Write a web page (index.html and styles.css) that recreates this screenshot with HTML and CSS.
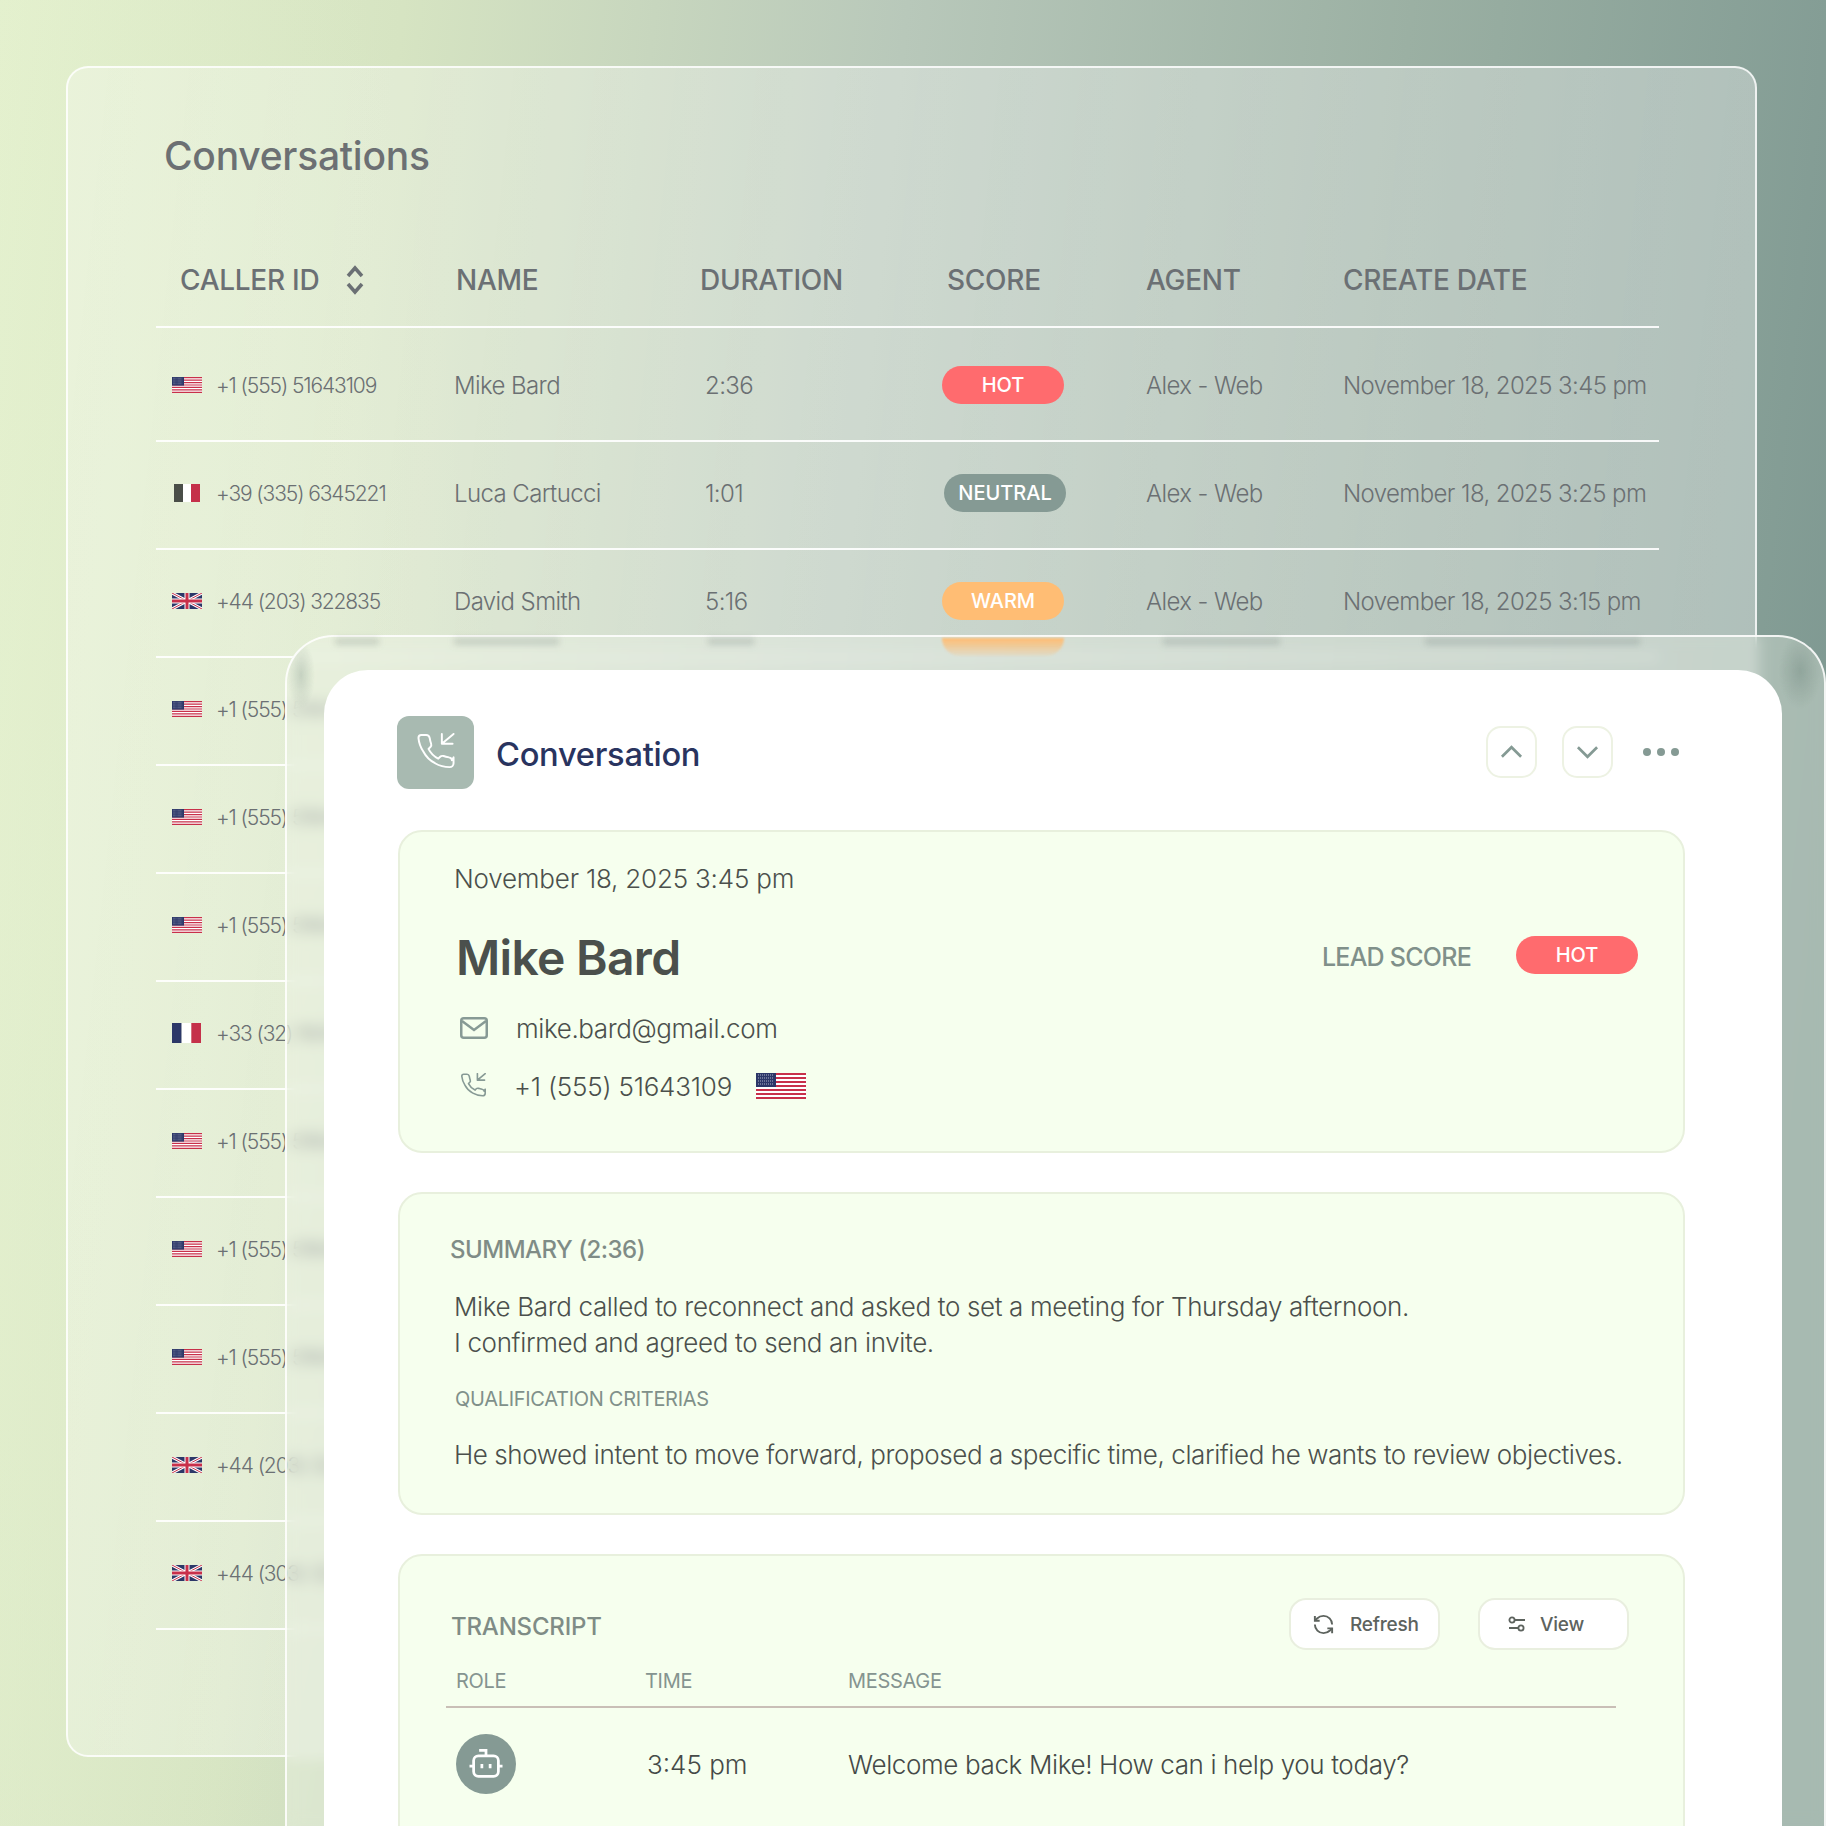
FILE: index.html
```html
<!DOCTYPE html>
<html>
<head>
  <title>Conversations</title>
  <link rel="stylesheet" href="styles.css">
</head>
<body>
  <svg class="defs" width="0" height="0">
    <symbol id="flag-us" viewBox="0 0 50 26" preserveAspectRatio="none">
      <rect width="50" height="26" fill="#fff"/>
      <path d="M0 1h50M0 5h50M0 9h50M0 13h50M0 17h50M0 21h50M0 25h50" stroke="#c8304a" stroke-width="2"/>
      <rect width="20" height="14" fill="#2c3768"/>
      <path d="M2 2h16M2 5h16M2 8h16M2 11h16" stroke="#aeb4c8" stroke-width="1" stroke-dasharray="1 1"/>
    </symbol>
    <symbol id="flag-it" viewBox="0 0 26 18" preserveAspectRatio="none">
      <rect width="9" height="18" fill="#4a4e48"/>
      <rect x="9" width="8" height="18" fill="#fff"/>
      <rect x="17" width="9" height="18" fill="#c5304a"/>
    </symbol>
    <symbol id="flag-fr" viewBox="0 0 30 20" preserveAspectRatio="none">
      <rect width="10" height="20" fill="#2c3768"/>
      <rect x="10" width="10" height="20" fill="#fff"/>
      <rect x="20" width="10" height="20" fill="#c5304a"/>
    </symbol>
    <symbol id="flag-uk" viewBox="0 0 30 16" preserveAspectRatio="none">
      <rect width="30" height="16" fill="#2c3768"/>
      <path d="M0 0l30 16M30 0L0 16" stroke="#fff" stroke-width="3"/>
      <path d="M0 0l30 16M30 0L0 16" stroke="#c8304a" stroke-width="1"/>
      <path d="M15 0v16M0 8h30" stroke="#fff" stroke-width="5"/>
      <path d="M15 0v16M0 8h30" stroke="#c8304a" stroke-width="3"/>
    </symbol>
    <symbol id="icon-call" viewBox="0 0 40 40">
      <path d="M38 25v6a4 4 0 0 1-4 4 30 30 0 0 1-15-4 28 28 0 0 1-12-12 30 30 0 0 1-5-14 3 3 0 0 1 3-3h5c2 0 3 1 3.500 3 .3 2 .8 4 1.500 6 .4 1.200 .2 2.400-.7 3.300l-2 2c2 4 6 8 10 10l2-2c1-1 2-1 3.500-.7 1.700 .6 3.500 1 5.500 1.400 2 .3 3 1.500 3 3z" fill="none" stroke="currentColor" stroke-linejoin="round"/>
      <path d="M26 1v10h11M26 11L38 1" fill="none" stroke="currentColor" stroke-linecap="round" stroke-linejoin="round"/>
    </symbol>
  </svg>

  <div class="page">
    <section class="panel">
      <h1 class="panel-title">Conversations</h1>
      <div class="grid-row table-head">
        <div class="head-caller">CALLER ID
          <svg class="sort-icon" viewBox="0 0 20 30"><path d="M3 11l7-8 7 8M3 19l7 8 7-8"/></svg>
        </div>
        <div class="head-name">NAME</div>
        <div>DURATION</div>
        <div class="head-score">SCORE</div>
        <div>AGENT</div>
        <div>CREATE DATE</div>
      </div>

      <div class="grid-row table-row first-row">
        <div class="caller"><svg class="flag"><use href="#flag-us"/></svg>+1 (555) 51643109</div>
        <div>Mike Bard</div>
        <div class="duration">2:36</div>
        <div><span class="pill pill-hot">HOT</span></div>
        <div>Alex - Web</div>
        <div>November 18, 2025 3:45 pm</div>
      </div>
      <div class="grid-row table-row">
        <div class="caller"><svg class="flag flag-small"><use href="#flag-it"/></svg>+39 (335) 6345221</div>
        <div>Luca Cartucci</div>
        <div class="duration">1:01</div>
        <div><span class="pill pill-neutral">NEUTRAL</span></div>
        <div>Alex - Web</div>
        <div>November 18, 2025 3:25 pm</div>
      </div>
      <div class="grid-row table-row">
        <div class="caller"><svg class="flag"><use href="#flag-uk"/></svg>+44 (203) 322835</div>
        <div>David Smith</div>
        <div class="duration">5:16</div>
        <div><span class="pill pill-warm">WARM</span></div>
        <div>Alex - Web</div>
        <div>November 18, 2025 3:15 pm</div>
      </div>
      <div class="grid-row table-row"><div class="caller"><svg class="flag"><use href="#flag-us"/></svg>+1 (555) 51643109</div></div>
      <div class="grid-row table-row"><div class="caller"><svg class="flag"><use href="#flag-us"/></svg>+1 (555) 51643109</div></div>
      <div class="grid-row table-row"><div class="caller"><svg class="flag"><use href="#flag-us"/></svg>+1 (555) 51643109</div></div>
      <div class="grid-row table-row"><div class="caller"><svg class="flag flag-fr"><use href="#flag-fr"/></svg>+33 (32) 1643109</div></div>
      <div class="grid-row table-row"><div class="caller"><svg class="flag"><use href="#flag-us"/></svg>+1 (555) 51643109</div></div>
      <div class="grid-row table-row"><div class="caller"><svg class="flag"><use href="#flag-us"/></svg>+1 (555) 51643109</div></div>
      <div class="grid-row table-row"><div class="caller"><svg class="flag"><use href="#flag-us"/></svg>+1 (555) 51643109</div></div>
      <div class="grid-row table-row"><div class="caller"><svg class="flag"><use href="#flag-uk"/></svg>+44 (203) 322835</div></div>
      <div class="grid-row table-row"><div class="caller"><svg class="flag"><use href="#flag-uk"/></svg>+44 (303) 322835</div></div>
    </section>

    <section class="glass">
      <i class="smear smear-phone"></i>
      <i class="smear smear-name"></i>
      <i class="smear smear-time"></i>
      <i class="smear smear-warm"></i>
      <i class="smear smear-agent"></i>
      <i class="smear smear-date"></i>

      <div class="card">
        <header class="card-head">
          <div class="call-tile"><svg class="tile-icon"><use href="#icon-call"/></svg></div>
          <h2 class="card-title">Conversation</h2>
          <div class="card-actions">
            <button class="nav-btn"><svg viewBox="0 0 24 14"><path d="M2 12L12 2l10 10"/></svg></button>
            <button class="nav-btn"><svg viewBox="0 0 24 14"><path d="M2 2l10 10L22 2"/></svg></button>
            <div class="dots"><span></span><span></span><span></span></div>
          </div>
        </header>

        <div class="box box-contact">
          <div class="contact-date">November 18, 2025 3:45 pm</div>
          <div class="contact-main">
            <div class="contact-name">Mike Bard</div>
            <div class="lead-label">LEAD SCORE</div>
            <span class="pill pill-hot pill-lead">HOT</span>
          </div>
          <div class="contact-line line-mail">
            <svg class="mail-icon" viewBox="0 0 28 22"><rect x="1.250" y="1.250" width="25.500" height="19.500" rx="2.500"/><path d="M2 4l12 9 12-9"/></svg>
            <span>mike.bard@gmail.com</span>
          </div>
          <div class="contact-line line-phone">
            <svg class="phone-icon"><use href="#icon-call"/></svg>
            <span>+1 (555) 51643109</span>
            <svg class="flag-big"><use href="#flag-us"/></svg>
          </div>
        </div>

        <div class="box box-summary">
          <div class="section-label">SUMMARY (2:36)</div>
          <p class="summary-text">Mike Bard called to reconnect and asked to set a meeting for Thursday afternoon.<br>I confirmed and agreed to send an invite.</p>
          <div class="criteria-label">QUALIFICATION CRITERIAS</div>
          <p class="criteria-text">He showed intent to move forward, proposed a specific time, clarified he wants to review objectives.</p>
        </div>

        <div class="box box-transcript">
          <div class="transcript-top">
            <div class="section-label transcript-label">TRANSCRIPT</div>
            <button class="tool-btn btn-refresh">
              <svg viewBox="0 0 24 24"><path d="M21 12a9 9 0 0 0-9-9 9.750 9.750 0 0 0-6.740 2.740L3 8"/><path d="M3 3v5h5"/><path d="M3 12a9 9 0 0 0 9 9 9.750 9.750 0 0 0 6.740-2.740L21 16"/><path d="M16 16h5v5"/></svg>
              Refresh
            </button>
            <button class="tool-btn btn-view">
              <svg viewBox="0 0 18 16"><circle cx="4" cy="4" r="2.600"/><path d="M6.600 4H17M1 12h9.400"/><circle cx="13" cy="12" r="2.600"/></svg>
              View
            </button>
          </div>
          <div class="transcript-grid transcript-head">
            <div>ROLE</div>
            <div>TIME</div>
            <div>MESSAGE</div>
          </div>
          <div class="transcript-grid transcript-row">
            <div class="bot-avatar">
              <svg viewBox="0 0 32 32"><path d="M16 10V6h-5"/><rect x="7" y="10" width="18" height="15" rx="3.500"/><path d="M4 17.500h3M25 17.500h3M13 16v3M19 16v3"/></svg>
            </div>
            <div class="row-time">3:45 pm</div>
            <div>Welcome back Mike! How can i help you today?</div>
          </div>
        </div>
      </div>
    </section>
  </div>
</body>
</html>
```

FILE: styles.css
```css
* {
  box-sizing: border-box;
}

body {
  margin: 0;
  font-family: "Inter", "Liberation Sans", sans-serif;
}

.defs {
  position: absolute;
}

.page {
  position: relative;
  width: 1826px;
  height: 1826px;
  overflow: hidden;
  padding: 66px 69px 0 66px;
  background:
    radial-gradient(ellipse 500px 1400px at 0 900px, rgba(232, 243, 212, .4), rgba(232, 243, 212, 0)),
    linear-gradient(96deg, #e3f0cd 0%, #d6e4c2 20%, #b8c8ba 45%, #9bb0a3 70%, #7f9992 95%);
}

/* back panel */
.panel {
  height: 1691px;
  padding: 64px 96px 0 88px;
  border: 2px solid rgba(255, 255, 255, .8);
  border-radius: 22px;
  background: linear-gradient(96deg, rgba(255, 255, 255, .27), rgba(255, 255, 255, .36));
}

.panel-title {
  margin: 0 0 60px 8px;
  font-size: 39px;
  line-height: 48px;
  font-weight: 500;
  letter-spacing: -.25px;
  color: #6c7073;
}

.grid-row {
  display: grid;
  grid-template-columns: 298px 246px 242px 204px 197px 316px;
  align-items: center;
  border-bottom: 2px solid rgba(255, 255, 255, .9);
}

.table-head {
  height: 88px;
  padding-bottom: 6px;
  font-size: 28px;
  font-weight: 500;
  letter-spacing: -.27px;
  color: #6b7074;
}

.head-caller {
  display: flex;
  align-items: center;
  padding-left: 24px;
}

.sort-icon {
  width: 20px;
  height: 30px;
  margin-left: 26px;
  fill: none;
  stroke: #6b7074;
  stroke-width: 3.500;
}

.head-name {
  padding-left: 2px;
}

.head-score {
  padding-left: 5px;
}

.table-row {
  height: 108px;
  padding-bottom: 4px;
  font-size: 24px;
  font-weight: 300;
  letter-spacing: -.6px;
  color: #6b7073;
}

.first-row {
  height: 114px;
  padding-top: 6px;
}

.caller {
  display: flex;
  align-items: center;
  padding-left: 16px;
  font-size: 21px;
  letter-spacing: -1.100px;
  white-space: nowrap;
}

.flag {
  flex: none;
  width: 30px;
  height: 16px;
  margin-right: 14px;
}

.flag-small {
  width: 26px;
  height: 18px;
  margin-left: 2px;
  margin-right: 16px;
}

.flag-fr {
  width: 29px;
  height: 20px;
  margin-right: 15px;
}

.duration {
  padding-left: 5px;
}

.pill {
  display: inline-flex;
  align-items: center;
  justify-content: center;
  width: 122px;
  height: 38px;
  border-radius: 19px;
  font-size: 20px;
  font-weight: 500;
  letter-spacing: 0;
  color: #fff;
}

.pill-hot {
  background: #ff6b6e;
}

.pill-neutral {
  margin-left: 2px;
  background: #859a94;
}

.pill-warm {
  background: #ffbd74;
}

/* front glass sheet */
.glass {
  position: absolute;
  left: 285px;
  top: 635px;
  width: 1541px;
  height: 1260px;
  padding: 33px 0 0 37px;
  border: 2px solid rgba(255, 255, 255, .85);
  border-radius: 48px 48px 0 0;
  background:
    radial-gradient(ellipse 14px 34px at 14px 38px, rgba(120, 140, 130, .3), rgba(120, 140, 130, 0)),
    radial-gradient(ellipse 22px 38px at calc(100% - 24px) 34px, rgba(90, 115, 105, .3), rgba(90, 115, 105, 0)),
    rgba(238, 245, 232, .36);
  backdrop-filter: blur(7px);
}

.smear {
  position: absolute;
  top: 1px;
  height: 7px;
  background: rgba(95, 105, 105, .22);
  filter: blur(3px);
}

.smear-phone {
  left: 48px;
  width: 44px;
}

.smear-name {
  left: 167px;
  width: 105px;
}

.smear-time {
  left: 421px;
  width: 46px;
}

.smear-warm {
  left: 655px;
  width: 122px;
  height: 18px;
  border-radius: 0 0 30px 30px;
  background: linear-gradient(#ffbd74, rgba(255, 189, 116, .15));
  filter: blur(1px);
}

.smear-agent {
  left: 876px;
  width: 117px;
}

.smear-date {
  left: 1138px;
  width: 215px;
}

.card {
  position: relative;
  display: flex;
  flex-direction: column;
  gap: 39px;
  width: 1458px;
  height: 1300px;
  padding: 46px 0 0 74px;
  border-radius: 44px 44px 0 0;
  background: #fff;
}

.card-head {
  display: flex;
  align-items: center;
  width: 1282px;
  margin-left: -1px;
  margin-bottom: 2px;
}

.call-tile {
  display: flex;
  align-items: center;
  justify-content: center;
  width: 77px;
  height: 73px;
  border-radius: 12px;
  background: #a8bab1;
}

.tile-icon {
  width: 40px;
  height: 39px;
  color: #fff;
  stroke-width: 2px;
}

.card-title {
  margin: 2px 0 0 22px;
  font-size: 32.700px;
  line-height: 40px;
  font-weight: 500;
  letter-spacing: -.3px;
  color: #29345f;
}

.card-actions {
  display: flex;
  align-items: center;
  gap: 25px;
  margin-left: auto;
  margin-bottom: 2px;
}

.nav-btn {
  display: flex;
  align-items: center;
  justify-content: center;
  width: 51px;
  height: 52px;
  padding: 0;
  border: 2px solid #edf2e3;
  border-radius: 15px;
  background: #fff;
}

.nav-btn svg {
  width: 23px;
  height: 14px;
  fill: none;
  stroke: #859a94;
  stroke-width: 2.800;
}

.dots {
  display: flex;
  gap: 6px;
  margin-left: 5px;
}

.dots span {
  width: 8px;
  height: 8px;
  border-radius: 50%;
  background: #859a94;
}

.box {
  width: 1287px;
  height: 323px;
  flex: none;
  border: 2px solid #e8f0dd;
  border-radius: 24px;
  background: #f6ffee;
  color: #4b504c;
  font-size: 26px;
}

.box-contact {
  padding: 30px 45px 0 54px;
}

.contact-date {
  line-height: 34px;
  font-weight: 300;
  letter-spacing: -.2px;
}

.contact-main {
  display: flex;
  align-items: center;
  height: 60px;
  margin-top: 31px;
  padding-left: 2px;
}

.contact-name {
  flex: 1;
  font-size: 48px;
  font-weight: 600;
  letter-spacing: -.7px;
}

.lead-label {
  margin-right: 45px;
  font-size: 25px;
  font-weight: 500;
  letter-spacing: -.75px;
  color: #80908a;
}

.pill-lead {
  margin-bottom: 4px;
}

.contact-line {
  display: flex;
  align-items: center;
  height: 34px;
  padding-left: 6px;
  font-weight: 300;
}

.line-mail {
  margin-top: 24px;
  letter-spacing: -.4px;
}

.line-phone {
  margin-top: 24px;
  letter-spacing: -.2px;
}

.mail-icon {
  flex: none;
  width: 28px;
  height: 22px;
  margin-right: 28px;
  fill: none;
  stroke: #879a95;
  stroke-width: 2.500;
}

.phone-icon {
  flex: none;
  width: 27px;
  height: 26px;
  margin-right: 27px;
  color: #879a95;
  stroke-width: 2.500px;
}

.flag-big {
  width: 50px;
  height: 26px;
  margin-left: 24px;
}

.section-label {
  font-size: 24px;
  line-height: 30px;
  font-weight: 500;
  letter-spacing: -.5px;
  color: #7f8c86;
}

.box-summary {
  padding: 41px 0 0 50px;
}

.summary-text {
  margin: 24px 0 0 4px;
  line-height: 36px;
  font-weight: 300;
  letter-spacing: -.36px;
}

.criteria-label {
  margin: 25px 0 0 5px;
  font-size: 20px;
  line-height: 26px;
  font-weight: 400;
  letter-spacing: -.3px;
  color: #80908a;
}

.criteria-text {
  margin: 25px 0 0 4px;
  line-height: 36px;
  font-weight: 300;
  letter-spacing: -.42px;
}

.box-transcript {
  height: 320px;
  padding: 42px 0 0 46px;
}

.transcript-top {
  display: flex;
  align-items: center;
  padding-left: 5px;
}

.transcript-label {
  margin-top: 6px;
  letter-spacing: -.2px;
}

.tool-btn {
  display: flex;
  align-items: center;
  width: 151px;
  height: 52px;
  padding: 0;
  border: 2px solid #e9efdf;
  border-radius: 17px;
  background: #fff;
  font-family: inherit;
  font-size: 19px;
  font-weight: 500;
  letter-spacing: -.2px;
  color: #5d635e;
}

.tool-btn svg {
  fill: none;
  stroke: #5d635e;
  stroke-width: 2;
}

.btn-refresh {
  margin-left: auto;
  padding-left: 21px;
}

.btn-refresh svg {
  width: 23px;
  height: 23px;
  margin-right: 15px;
}

.btn-view {
  margin-left: 38px;
  margin-right: 54px;
  padding-left: 28px;
}

.btn-view svg {
  width: 18px;
  height: 16px;
  margin-right: 14px;
  stroke-width: 1.800;
}

.transcript-grid {
  display: grid;
  grid-template-columns: 189px 203px 1fr;
  width: 1170px;
  padding-left: 10px;
}

.transcript-head {
  align-items: center;
  height: 39px;
  margin-top: 19px;
  padding-bottom: 13px;
  border-bottom: 2px solid #c9bfb6;
  font-size: 20px;
  letter-spacing: -.3px;
  color: #859490;
}

.transcript-row {
  align-items: center;
  margin-top: 26px;
  font-weight: 300;
  letter-spacing: -.37px;
  color: #454a47;
}

.row-time {
  padding-left: 2px;
  letter-spacing: 0;
}

.bot-avatar {
  display: flex;
  align-items: center;
  justify-content: center;
  width: 60px;
  height: 60px;
  border-radius: 50%;
  background: #859a94;
}

.bot-avatar svg {
  width: 44px;
  height: 44px;
  fill: none;
  stroke: #fff;
  stroke-width: 2;
}
```
